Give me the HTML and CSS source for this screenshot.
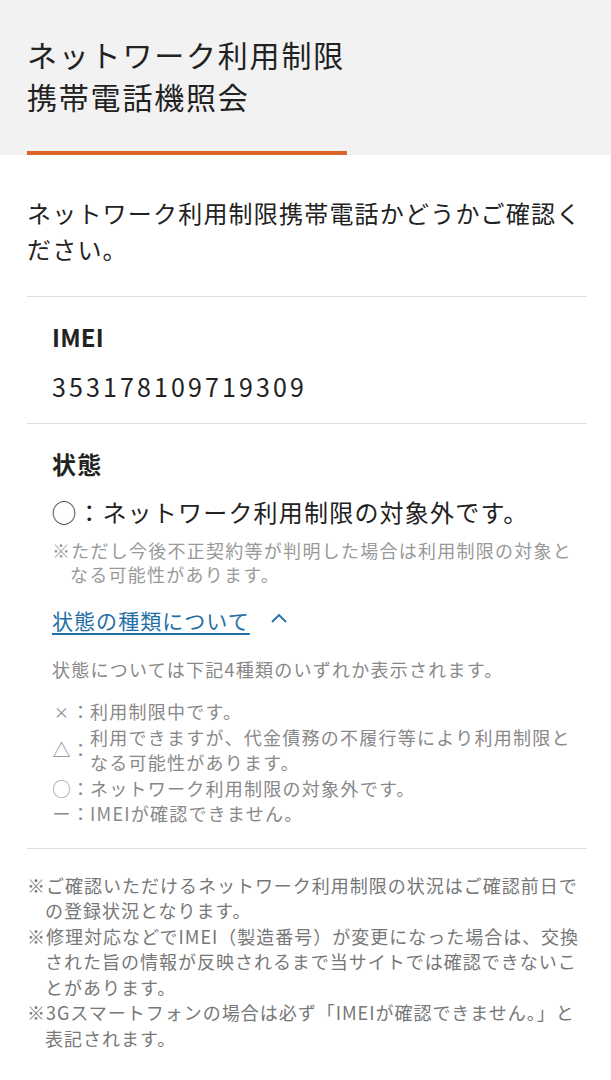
FILE: index.html
```html
<!DOCTYPE html>
<html lang="ja">
<head>
<meta charset="utf-8">
<title>ネットワーク利用制限携帯電話機照会</title>
<link rel="stylesheet" href="styles.css">
</head>
<body>
<header class="page-header">
  <h1 class="page-title">ネットワーク利用制限<br>携帯電話機照会</h1>
  <div class="title-bar"></div>
</header>
<main class="main">
  <p class="intro">ネットワーク利用制限携帯電話かどうかご確認ください。</p>
  <section class="section imei">
    <h2 class="label label-latin">IMEI</h2>
    <p class="imei-number">353178109719309</p>
  </section>
  <section class="section status">
    <h2 class="label">状態</h2>
    <p class="status-result">◯：ネットワーク利用制限の対象外です。</p>
    <p class="status-note">※ただし今後不正契約等が判明した場合は利用制限の対象となる可能性があります。</p>
    <div class="toggle">
      <a class="toggle-link" href="#">状態の種類について</a>
      <svg class="chevron" width="18" height="12" viewBox="0 0 18 12"><polyline points="2,10 9,3 16,10" fill="none" stroke="#1f6fa6" stroke-width="1.8"/></svg>
    </div>
    <p class="legend-intro">状態については下記4種類のいずれか表示されます。</p>
    <ul class="legend">
      <li class="legend-item"><span class="mark mark-x">×</span><span class="colon">：</span><span class="legend-text">利用制限中です。</span></li>
      <li class="legend-item"><span class="mark">△</span><span class="colon">：</span><span class="legend-text">利用できますが、代金債務の不履行等により利用制限となる可能性があります。</span></li>
      <li class="legend-item"><span class="mark">◯</span><span class="colon">：</span><span class="legend-text">ネットワーク利用制限の対象外です。</span></li>
      <li class="legend-item"><span class="mark">ー</span><span class="colon">：</span><span class="legend-text">IMEIが確認できません。</span></li>
    </ul>
  </section>
  <section class="notes">
    <p class="note">※ご確認いただけるネットワーク利用制限の状況はご確認前日での登録状況となります。</p>
    <p class="note">※修理対応などでIMEI（製造番号）が変更になった場合は、交換された旨の情報が反映されるまで当サイトでは確認できないことがあります。</p>
    <p class="note">※3Gスマートフォンの場合は必ず「IMEIが確認できません。」と表記されます。</p>
  </section>
</main>
</body>
</html>
```
FILE: styles.css
```css
* { box-sizing: border-box; }
html, body { margin: 0; padding: 0; }
body {
  background: #fff;
  color: #222;
  font-family: "Noto Sans CJK JP", "Noto Sans", sans-serif;
  width: 611px;
}
p, h1, h2, ul { margin: 0; padding: 0; }

.page-header {
  background: #f2f2f2;
  padding: 33px 0 0 0;
}
.page-title {
  font-size: 30px;
  font-weight: 400;
  line-height: 42px;
  letter-spacing: 0.06em;
  padding: 0 27px;
  color: #222;
}
.title-bar {
  margin: 34px 0 0 27px;
  width: 320px;
  height: 4px;
  background: #dc6428;
}

.main { padding: 0 24px 0 27px; }

.intro {
  margin-top: 40px;
  font-size: 24px;
  line-height: 36px;
  letter-spacing: 0.05em;
  padding-bottom: 29px;
}

.section {
  border-top: 1px solid #e0e0e0;
  padding-left: 25px;
}
.label {
  font-size: 24px;
  font-weight: 700;
  line-height: 36px;
  letter-spacing: 0.05em;
}
.label-latin { letter-spacing: 0.01em; }
.imei { padding-top: 22px; padding-bottom: 19px; }
.imei-number {
  margin-top: 13px;
  font-size: 25px;
  line-height: 36px;
  letter-spacing: 0.125em;
}

.status { padding-top: 22px; padding-bottom: 21px; }
.status-result {
  margin-top: 12px;
  font-size: 24px;
  line-height: 36px;
  letter-spacing: 0.05em;
}
.status-note {
  margin-top: 8px;
  font-size: 18px;
  line-height: 24px;
  letter-spacing: 0.07em;
  color: #999;
  padding-left: 1em;
  text-indent: -1em;
}
.toggle {
  margin-top: 19px;
  display: flex;
  align-items: center;
  gap: 20px;
  height: 30px;
}
.toggle-link {
  font-size: 21px;
  line-height: 30px;
  letter-spacing: 0.05em;
  color: #1f6fa6;
  text-decoration: underline;
  text-decoration-thickness: 2px;
  text-underline-offset: 4px;
}
.chevron { display: block; margin-top: -4px; }

.legend-intro {
  margin-top: 22px;
  font-size: 18px;
  line-height: 25px;
  letter-spacing: 0.07em;
  color: #888;
}
.legend {
  list-style: none;
  margin-top: 17px;
  color: #888;
  font-size: 18px;
  line-height: 25.5px;
  letter-spacing: 0.07em;
}
.legend-item {
  display: flex;
  align-items: center;
}
.mark, .colon {
  flex: none;
  width: 19px;
  text-align: center;
  letter-spacing: 0;
}
.mark-x { font-size: 15px; }
.legend-text { flex: 1; }

.notes {
  border-top: 1px solid #e0e0e0;
  padding-top: 24px;
  padding-bottom: 20px;
}
.note {
  font-size: 18px;
  line-height: 25.5px;
  letter-spacing: 0.055em;
  color: #777;
  padding-left: 1em;
  text-indent: -1em;
}
```
